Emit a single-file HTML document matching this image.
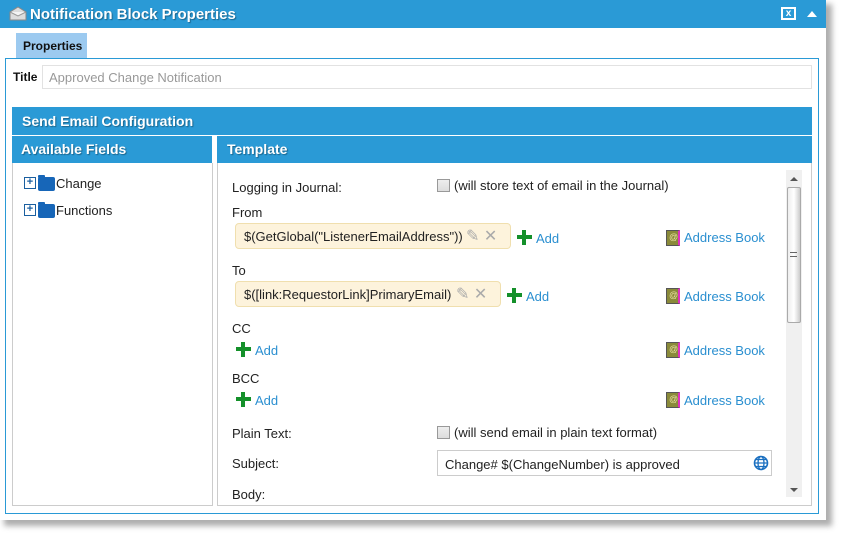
<!DOCTYPE html>
<html><head><style>
*{margin:0;padding:0;box-sizing:border-box}
body{width:841px;height:534px;background:#fff;font-family:"Liberation Sans",sans-serif;font-size:13px;color:#222;position:relative;overflow:hidden}
.a{position:absolute}
.hd{background:#2a9ad6;color:#fff;font-weight:bold;font-size:14px;text-shadow:1px 1px 1px rgba(0,0,0,.35)}
.lnk{color:#2a8fd0;font-size:13px}
.plus{position:absolute;width:15px;height:15px}
.plus:before{content:"";position:absolute;left:5px;top:0;width:4px;height:15px;background:#14902a}
.plus:after{content:"";position:absolute;left:0;top:5px;width:15px;height:4px;background:#14902a}
.chip{position:absolute;background:#fdf3dc;border:1px solid #f0dfae;border-radius:4px;height:26px;padding:5px 0 0 8px;font-size:13px}
.cb{position:absolute;width:13px;height:13px;border:1px solid #999;background:linear-gradient(#eee,#ddd)}
.book{position:absolute;width:14px;height:16px;background:#8a8a3a;border:1px solid #555;border-right:2px solid #e030c0}
.book:after{content:"@";position:absolute;left:2px;top:1px;font-size:9px;color:#e8e0a0}
.fold{position:absolute;width:17px;height:14px;background:#1766b8;border-radius:2px}
.fold:before{content:"";position:absolute;left:0;top:-2px;width:7px;height:3px;background:#1766b8;border-radius:1px}
</style></head><body>
<div class="a" style="left:4px;top:4px;width:828px;height:522px;background:#999;filter:blur(3px);opacity:.8"></div>
<div class="a" style="left:0;top:0;width:826px;height:520px;background:#fff"></div>
<div class="a hd" style="left:0;top:0;width:826px;height:28px"></div>
<svg class="a" style="left:9px;top:5px" width="18" height="16"><path d="M1 7 L9 2 L17 7 L17 15 L1 15 Z" fill="#ddd" stroke="#888"/><path d="M1 7 L9 11 L17 7" fill="#f4f4f4" stroke="#999"/></svg>
<div class="a hd" style="left:30px;top:6px;font-size:15px">Notification Block Properties</div>
<div class="a" style="left:781px;top:7px;width:15px;height:13px;border:2px solid #fff;color:#fff;font-size:10px;font-weight:bold;text-align:center;line-height:10px">x</div>
<div class="a" style="left:807px;top:11px;width:0;height:0;border-left:5px solid transparent;border-right:5px solid transparent;border-bottom:6px solid #fff"></div>
<div class="a" style="left:16px;top:33px;width:71px;height:25px;background:#9ccaf0;font-weight:bold;font-size:12px;padding:6px 0 0 7px;color:#111">Properties</div>
<div class="a" style="left:5px;top:58px;width:814px;height:456px;border:1px solid #2a9ad6"></div>
<div class="a" style="left:13px;top:70px;font-weight:bold;font-size:12px;color:#111">Title</div>
<div class="a" style="left:42px;top:65px;width:770px;height:24px;border:1px solid #e2e2e2;padding:4px 6px;color:#999;font-size:13px">Approved Change Notification</div>
<div class="a hd" style="left:12px;top:107px;width:800px;height:28px;padding:6px 10px">Send Email Configuration</div>
<div class="a hd" style="left:12px;top:136px;width:200px;height:27px;padding:5px 9px">Available Fields</div>
<div class="a hd" style="left:217px;top:136px;width:595px;height:27px;padding:5px 10px">Template</div>
<div class="a" style="left:12px;top:163px;width:201px;height:343px;border:1px solid #ccc;border-top:0"></div>
<div class="a" style="left:217px;top:163px;width:595px;height:343px;border:1px solid #ccc;border-top:0"></div>
<div class="a" style="left:24px;top:177px;width:12px;height:12px;border:1px solid #1a5fa0;font-size:11px;line-height:9px;text-align:center;font-weight:bold;color:#1a5fa0">+</div>
<div class="fold" style="left:38px;top:177px"></div>
<div class="a" style="left:56px;top:176px">Change</div>
<div class="a" style="left:24px;top:204px;width:12px;height:12px;border:1px solid #1a5fa0;font-size:11px;line-height:9px;text-align:center;font-weight:bold;color:#1a5fa0">+</div>
<div class="fold" style="left:38px;top:204px"></div>
<div class="a" style="left:56px;top:203px">Functions</div>
<div class="a" style="left:786px;top:170px;width:16px;height:327px;background:#f0f0f0"></div>
<div class="a" style="left:787px;top:187px;width:14px;height:136px;background:linear-gradient(90deg,#eee,#fff,#ccc);border:1px solid #aaa;border-radius:2px"></div>
<div class="a" style="left:790px;top:177px;border-left:4px solid transparent;border-right:4px solid transparent;border-bottom:4px solid #555"></div>
<div class="a" style="left:790px;top:488px;border-left:4px solid transparent;border-right:4px solid transparent;border-top:4px solid #555"></div>
<div class="a" style="left:790px;top:252px;width:7px;height:5px;border-top:1px solid #666;border-bottom:1px solid #666"></div>
<div class="a" style="left:232px;top:180px">Logging in Journal:</div>
<div class="cb" style="left:437px;top:179px"></div>
<div class="a" style="left:454px;top:178px">(will store text of email in the Journal)</div>
<div class="a" style="left:232px;top:205px">From</div>
<div class="chip" style="left:235px;top:223px;width:276px">$(GetGlobal("ListenerEmailAddress"))<span style="color:#aaa;font-size:16px;position:absolute;left:230px;top:2px">✎ ✕</span></div>
<div class="plus" style="left:517px;top:230px"></div><div class="a lnk" style="left:536px;top:231px">Add</div>
<div class="book" style="left:666px;top:230px"></div><div class="a lnk" style="left:684px;top:230px">Address Book</div>
<div class="a" style="left:232px;top:263px">To</div>
<div class="chip" style="left:235px;top:281px;width:266px">$([link:RequestorLink]PrimaryEmail)<span style="color:#aaa;font-size:16px;position:absolute;left:220px;top:2px">✎ ✕</span></div>
<div class="plus" style="left:507px;top:288px"></div><div class="a lnk" style="left:526px;top:289px">Add</div>
<div class="book" style="left:666px;top:288px"></div><div class="a lnk" style="left:684px;top:289px">Address Book</div>
<div class="a" style="left:232px;top:321px">CC</div>
<div class="plus" style="left:236px;top:342px"></div><div class="a lnk" style="left:255px;top:343px">Add</div>
<div class="book" style="left:666px;top:342px"></div><div class="a lnk" style="left:684px;top:343px">Address Book</div>
<div class="a" style="left:232px;top:371px">BCC</div>
<div class="plus" style="left:236px;top:392px"></div><div class="a lnk" style="left:255px;top:393px">Add</div>
<div class="book" style="left:666px;top:392px"></div><div class="a lnk" style="left:684px;top:393px">Address Book</div>
<div class="a" style="left:232px;top:426px">Plain Text:</div>
<div class="cb" style="left:437px;top:426px"></div>
<div class="a" style="left:454px;top:425px">(will send email in plain text format)</div>
<div class="a" style="left:232px;top:456px">Subject:</div>
<div class="a" style="left:437px;top:450px;width:335px;height:26px;border:1px solid #ccc;padding:6px 0 0 7px">Change# $(ChangeNumber) is approved</div>
<svg class="a" style="left:753px;top:455px" width="16" height="16"><circle cx="8" cy="8" r="6.5" fill="none" stroke="#1a6fc0" stroke-width="1.6"/><ellipse cx="8" cy="8" rx="3" ry="6.5" fill="none" stroke="#1a6fc0" stroke-width="1.3"/><path d="M1.5 8h13M3 4.5h10M3 11.5h10" stroke="#1a6fc0" stroke-width="1.2"/></svg>
<div class="a" style="left:232px;top:487px">Body:</div>
</body></html>
